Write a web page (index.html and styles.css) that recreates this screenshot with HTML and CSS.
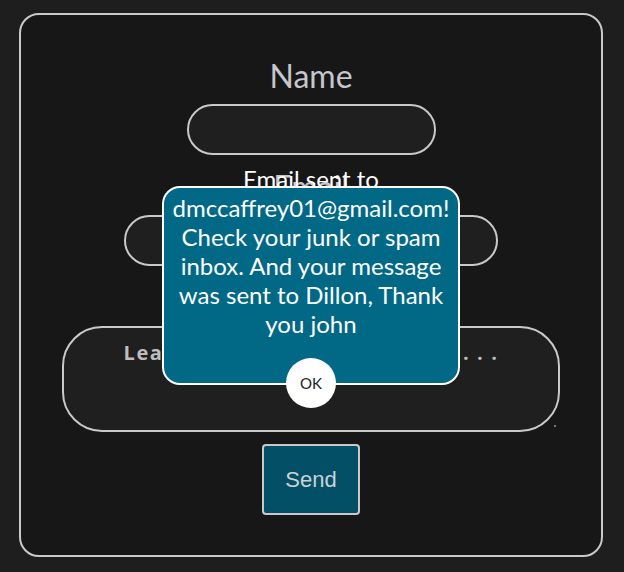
FILE: index.html
```html
<!DOCTYPE html>
<html lang="en">
<head>
<meta charset="utf-8">
<title>Contact</title>
<link rel="stylesheet" href="styles.css">
</head>
<body>
<main class="card">
  <form class="form">
    <label class="label">Name</label>
    <div class="field field-name"></div>
    <label class="label">Email</label>
    <div class="field field-email"></div>
    <label class="label">Message</label>
    <div class="field field-message"><span class="placeholder">Leave a message for me here . . .</span><span class="grip"></span></div>
    <button type="button" class="send">Send</button>
  </form>
  <div class="popup">
    <p class="popup-text">Email sent to dmccaffrey01@gmail.com! Check your junk or spam inbox. And your message was sent to Dillon, Thank you john</p>
    <button type="button" class="ok">OK</button>
  </div>
</main>
</body>
</html>
```
FILE: styles.css
```css
html, body {
  margin: 0;
  padding: 0;
  background: #1e1e1e;
}
body {
  padding: 13px 21px 15px 19px;
}
.card {
  position: relative;
  box-sizing: border-box;
  width: 584px;
  height: 544px;
  background: #171717;
  border: 2px solid #c9c9c9;
  border-radius: 20px;
  padding-top: 44px;
}
.form {
  display: flex;
  flex-direction: column;
  align-items: center;
}
.label {
  font-family: Lato, "Open Sans", sans-serif;
  font-size: 32px;
  line-height: 34px;
  height: 34px;
  color: #c6c6cc;
  margin-bottom: 11px;
}
.field {
  box-sizing: border-box;
  background: #1f1f1f;
  border: 2px solid #c9c9c9;
  border-radius: 26px;
  height: 51px;
  margin-bottom: 15px;
}
.field-name { width: 249px; }
.field-email { width: 374px; }
.field-message {
  position: relative;
  width: 498px;
  height: 106px;
  border-radius: 40px;
  margin-bottom: 12px;
  text-align: center;
  padding-top: 11px;
}
.placeholder {
  font-family: "Open Sans", sans-serif;
  font-weight: 700;
  font-size: 20px;
  letter-spacing: 1.6px;
  color: #bdbdbd;
}
.grip {
  position: absolute;
  right: 2px;
  bottom: 3px;
  width: 2px;
  height: 2px;
  background: #777;
}
.send {
  box-sizing: border-box;
  width: 98px;
  height: 71px;
  background: #024f66;
  border: 2px solid #c9c9c9;
  border-radius: 4px;
  color: #c9d2d6;
  font-family: "Liberation Sans", Arial, sans-serif;
  font-size: 22px;
  padding: 0;
}
.popup {
  position: absolute;
  left: 141px;
  top: 171px;
  box-sizing: border-box;
  width: 298px;
  height: 199px;
  background: #016886;
  border: 2px solid #ffffff;
  border-radius: 18px;
  display: flex;
  flex-direction: column;
  align-items: center;
}
.popup-text {
  margin: -24px 0 0;
  width: 286px;
  text-align: center;
  font-family: Lato, "Open Sans", sans-serif;
  font-size: 24px;
  line-height: 29px;
  color: #ffffff;
}
.ok {
  position: absolute;
  left: 50%;
  bottom: -25px;
  transform: translateX(-50%);
  width: 50px;
  height: 50px;
  border-radius: 50%;
  border: none;
  background: #ffffff;
  color: #222;
  font-family: Lato, "Open Sans", sans-serif;
  font-size: 15px;
  padding: 0;
}
```
